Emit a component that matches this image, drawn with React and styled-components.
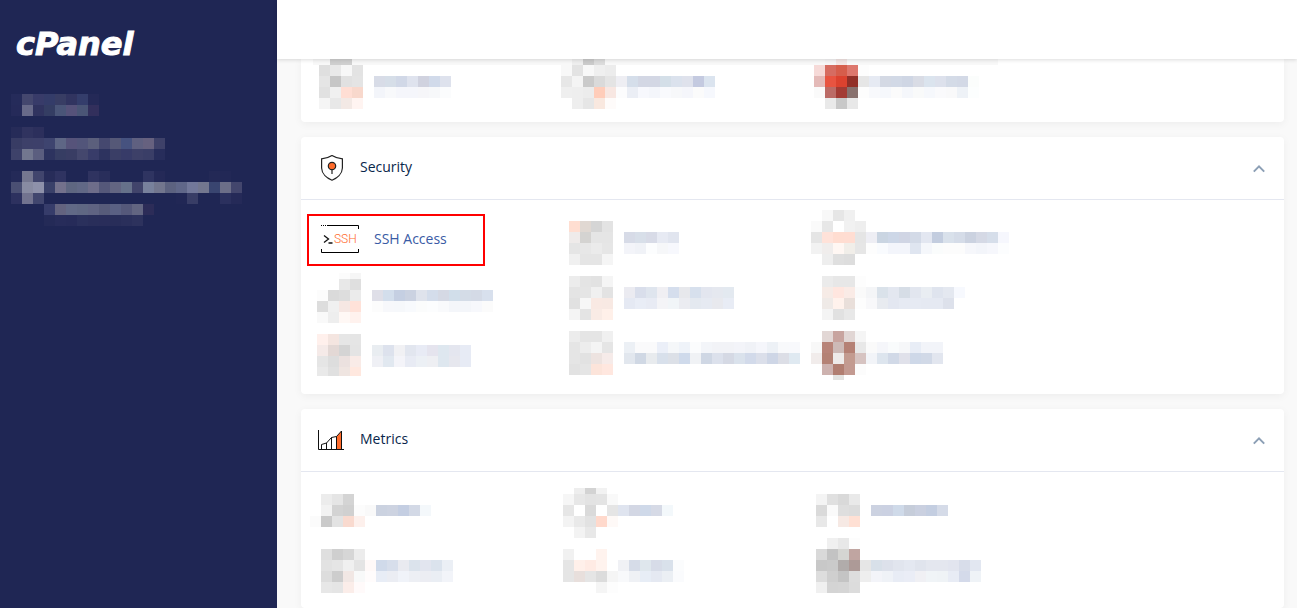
import React from 'react';
import styled, { createGlobalStyle } from 'styled-components';

const GlobalStyle = createGlobalStyle`
    *{
        box-sizing: border-box;
    }

    body{
        margin: 0;
        background-color: #f9f9f9;
        color: #08264a;
        font-family: 'Open Sans', 'Noto Sans', sans-serif;
        font-size: 14px;
        line-height: 20px;
    }
`;

const Page = styled.div`
    display: flex;
    height: 100vh;
    overflow: hidden;
`;

const Sidebar = styled.aside`
    flex: 0 0 277px;
    padding: 24px 11px;
    background-color: #1f2654;
`;

const Logo = styled.a`
    display: block;
    padding-left: 5px;
    margin-bottom: 30px;
    color: #fff;
    font-family: 'DejaVu Sans', Verdana, sans-serif;
    font-size: 32px;
    font-weight: 700;
    font-style: italic;
    line-height: 40px;
    text-decoration: none;
    -webkit-text-stroke: 1px #fff;
`;

const Main = styled.div`
    flex: 1;
    min-width: 0;
    display: flex;
    flex-direction: column;
`;

const Topbar = styled.header`
    flex: 0 0 59px;
    z-index: 1;
    background-color: #fff;
    box-shadow: 0 1px 4px rgba(0, 0, 0, 0.14);
`;

const Content = styled.main`
    flex: 1;
    min-height: 0;
    overflow: hidden;
    display: flex;
    flex-direction: column;
    gap: 15px;
    padding: 0 13px 0 24px;
`;

const Panel = styled.section`
    flex: none;
    background-color: #fff;
    border-radius: ${props => props.$flush ? '0 0 4px 4px' : '4px'};
    box-shadow: 0 2px 8px rgba(0, 0, 0, 0.05);
`;

const PanelHeader = styled.div`
    display: flex;
    align-items: center;
    gap: 14px;
    height: 63px;
    padding: 0 17px;
    border-bottom: 1px solid #e4e7f0;
`;

const PanelTitle = styled.h2`
    flex: 1;
    margin: 0 0 2px;
    font-size: 14px;
    font-weight: 400;
`;

const Toggle = styled.button`
    display: flex;
    padding: 2px;
    border: 0;
    background: none;
    color: #8c9fb5;
    cursor: pointer;
`;

const Tiles = styled.div`
    display: grid;
    grid-template-columns: repeat(auto-fill, 252px);
    grid-auto-rows: 52px;
    row-gap: 6px;
    padding: ${props => props.$flush ? '0 6px 11px' : '14px 6px 12px'};
    ${props => props.$flush && 'background: linear-gradient(#f8f8f8, #f8f8f8) no-repeat 12px 0 / 685px 6px;'}
`;

const Highlighted = styled.a`
    display: flex;
    align-items: center;
    gap: 15px;
    width: 178px;
    height: 52px;
    padding: 0 12px;
    border: 2px solid #f00;
    color: #3a5ba5;
    text-decoration: none;

    span{
        margin-bottom: 2px;
    }
`;

const Blocks = styled.svg`
    display: block;
    width: 100%;
    height: ${props => props.$height}px;
    overflow: visible;
    shape-rendering: crispEdges;
`;

const CELL = 11;

// every row is a list of hex colours, "-" leaves the cell empty
// first and last are the heights of a top or bottom row that is cut off
const Mosaic = ({ x = 0, y = 0, first = CELL, last = CELL, rows, height = 52 }) => {
    const rowHeight = r => {
        if (r === 0) return first;
        return r === rows.length - 1 ? last : CELL;
    };

    return (
        <Blocks $height={height} aria-hidden="true">
            {rows.map((row, r) => row.split(' ').map((color, c) => color !== '-' && (
                <rect
                    key={`${r}-${c}`}
                    x={x + c * CELL}
                    y={r === 0 ? y : y + first + (r - 1) * CELL}
                    width={CELL}
                    height={rowHeight(r)}
                    fill={`#${color}`}
                />
            )))}
        </Blocks>
    );
};

const account = [
    '252b5a 44476e 383b69 343c69 383d64 313460 343d6b 242957',
    '252a59 686a89 30335f 343d63 4a5578 56527a 4a5576 322f5c',
    '-',
    '262b58 30335f 2c2f5c',
    '383c64 3d4069 3d406a 3e446f 5e6685 56537a 52557a 5b5f7c 45486f 555877 46527f 5f6080 66617f 3e4169',
    '3e426a 72778f 5b5e7f 2d335f 363d63 393d64 44476d 383c69 2d335f 3a3e66 373b68 3d4068 3a3e67 272d5b',
    '-',
    '242a58 757790 41456d 272c59 2f3361 - - 2f3360 292e5b - - - 2f3461 242957 - - - - 232956 222856',
    '4a4f73 888ba2 8e91aa 394069 73718c 5e6681 616886 6e6d8a 55587a 636582 66718a 41446b 78819c 72768e 5c6280 606789 72789a 73778f 394570 6c6e88 43466d',
    '2d315f 72738f 41466e - - - - - - - - - - - - 212755 383d66 - - 2b305e 252a58',
    '- - - 363c6a 63637f 616986 5f6783 5f6382 575b7a 5a6083 55587a 626581 2c2c58',
    '- - - 242a57 272c5a 262b59 2a305c 292e5a 292d5a 282d59 2a2f5b 2d325d',
];

const topTiles = [
    {
        x: 12, first: 6, rows: [
            '- cfcfcf d0d0d0',
            'dfdfdf e9e9e9 f7f7f7 e3e3e3',
            'e5e5e5 c6c6c6 e1e1e1 e4e4e4 - d8dce7 d6dee8 d1d8e7 dfe3ee d0d2df d1daea dee2ed',
            'e1e1e1 f0f0f0 ffded4 f8d8cc - f3f5fa f8f9fb f5f6fb f5f6fb f6f6f9 f7f8fa fbfcfd',
            'f5f5f5 e8e8e8 f3e9e5 fff4f1',
        ],
    },
    {
        x: 2, first: 6, rows: [
            'f8f8f8 eeeeee cbcbcb dcdcdc',
            'f8f8f8 e3e3e3 f8f8f8 efefef ececec',
            'e7e7e7 f4f4f4 cacaca dadada e4e4e4 eeeef3 d5deea d3d7e4 d3d7e4 d4dfe8 dbe2ed dfe2ec c4cae0 dbe4ef',
            'efefef eeeeee ececec ffcdba f8e7e2 fcfcfd ebeef5 f7f8fd f4f6fb f9fafd f7f8fa f5f6fb fbfbfb f6f8fd',
            '- eeeeee e6e6e6 f9e8df fefbfa',
        ],
    },
    {
        x: 3, first: 6, rows: [
            '- f6f5f6 f3e5e4',
            'f6dad8 d66c61 d65d4b dd776d fdfdfd',
            'e4bab8 e85441 dc422f 923028 e6e6e6 e6eaf3 d4d9e4 d2d9e6 cfd6e4 d9dce5 dbe4ee dde1ec d4dbe7 d3d9e6 fbfdfc',
            'fafafa bb6b66 a33b34 88716e fdfdfd f8f9fc f6f8fc fbfbfb f5f7fb f9fafa f6f8fc fafafc f9f9fa eef2f7 fcfefe',
            '- e9e9e9 c8c8c8 e8e8e8',
        ],
    },
];

const securityTiles = [
    {
        x: 10, y: 7, rows: [
            'ffded1 e0d8d2 d5d5d5 e3e3e3',
            'efebea d4d3d1 e5e5e5 e5e5e5 - d7dbe7 d8dfe9 d8dbe7 e7eaf3 e1e5ef',
            'e5e5e5 e7e7e7 ebebeb e6e6e6 - f3f4f9 f0f2f7 fcfdfe f6f7f9 f7f8fd',
            'f0f0f0 e5e5e5 e5e5e5 f5f5f5',
        ],
    },
    {
        y: -4, rows: [
            '- f8f8f8 e6e6e6 f0f0f0',
            'fafafa e7e7e7 - f1f1f1 eeeeee',
            'e5e5e5 ffe2d9 ffddd1 ffddd2 e5e5e5 eeeef4 cad5e2 cdd7e7 d0d5e4 d3dae7 e3e7f1 c3cddf d9e1eb d5dce8 cbd2e0 d5d9e5 d6deea f6f7fd',
            'f2f2f2 f0edec fff7f3 f1eee9 e6e6e6 fdfdfd f9fbfe f3f5fb f3f5fb dfe5f0 f5f7fb fafcfc fcfcfc fcfcfc f6f7fb f3f5fa f6f7fc fcfdfe',
            '- eeeeee dfdfdf dddddd',
        ],
    },
    {
        x: 10, y: 1, first: 6, rows: [
            '- - fcfcfc f6f6f6',
            '- - e8e8e8 dfdfdf',
            'fcfcfc dadada dddddd ebebeb - dfdfe8 d3deec c5cfe2 cbd2e1 dfe3ec d4ddeb d5d9e4 d1deea d4dce7 d4dae6 d8e0ed',
            'dddddd f0f0f0 f6e7e3 ffe2d9 - fcfcfc f7f8fb f6f8fb f8fafd fbfcfc fcfdfe f9fafc f4f6fa f4f6fa f7f8fc fbfbfb',
            'f9f9f9 eeeeee fff8f5 fff2ee',
        ],
    },
    {
        x: 10, y: 4, rows: [
            'ececec e4e4e4 e2e2e2 f5f5f5',
            'e4e4e4 e5e5e5 f0f0f0 e3e3e3 - ebebf1 d9deeb dfe5ee f0eff3 d5deed e7e8ec d7e0ed e3e6ef e5e8ef e3e9f0',
            'e1e1e1 f7f7f7 f9e9e3 f8e9e3 - e5e9f3 e9edf6 e8ebf4 f4f4f7 f1f5f8 ebecf1 e4e9f0 e6eaf2 e8e9ee e8ecf5',
            'f4f4f4 e4e4e4 f9ebe5 fff0e9',
        ],
    },
    {
        y: 4, rows: [
            '- ebebeb e7e7e7 e7e7e7 fdfdfd',
            '- f6ebe6 ffe6df faebe6 fafafa f4f5f7 dae2ea e3e7f0 d6dde6 e2e6ef e9edf2 dfe4ee e4e8f0 f7f9fe',
            '- efeae7 fff2ec e9dfda fdfdfd f8f8fa e8ebf0 e3e7f1 e6eaf3 e6eaf3 e5e9f2 e5e9f2 dde1eb',
            '- f4f4f4 e1e1e1 e8e8e8',
        ],
    },
    {
        x: 10, y: 4, last: 9, rows: [
            'fff0ec f4e5e0 e6e6e6 e5e5e5',
            'f5eae8 e3d8d5 d4d4d4 e4e4e4 - e9edf1 dde2ed f1f1f4 e2e6ef e8ebf5 e5e4ee dee7ef e4e6ef e7ebf5',
            'e5e5e5 dddddd ebe1df f9ebe7 - eff0f5 e1e8f0 f4f4f9 e8ebf4 ecf0f5 eeeff3 dee7ef e6e7ee e7ebf5',
            'e9e9e9 e0e0e0 efe5e1 ffe8df',
        ],
    },
    {
        x: 10, y: 1, rows: [
            'ececec e5e5e5 e5e5e5 f0f0f0',
            'e5e5e5 ededed f4f4f4 e5e5e5 - ecf0f5 fafafb fafafb ebeff8 f5f7f9 eff3f9 fbfcfd f3f5f9 f2f3f7 f2f3f7 f3f4f9 f0f2f7 f5f6fb edf1f6 f8f9fb f8f9fc',
            'e5e5e5 e2e2e2 ede3e0 f6ebe9 - e2e7ee d0d8e4 e8ebee d8e0eb dce0e7 cfdaeb f0f2f5 cfd7e4 dce1ec d5d9e4 dae2ec d2daea dbdfea ced6e6 dcdee6 dfe9f1',
            'e2e2e2 e5e5e5 fce4da ffe7df',
        ],
    },
    {
        y: 1, last: 5, rows: [
            '- e2d7d5 c8a49f e1d6d4 f5f5f5',
            'f8f8f8 b88479 cdbab7 b58175 e8e8e8 fafafa f5f6fa f9fbfc f6f7f9 e8edf6 f2f4f9 f2f4f9',
            'f1eceb b48275 eeebea c39b90 d6c3c1 f2f4f8 dde5ee d1d9e7 e0e1ea ced8e8 d1d9e7 e2e6ef',
            '- cdb2af b17e71 c39a91 fcfcfc',
            '- - e3e3e1',
        ],
    },
];

const metricsTiles = [
    {
        x: 3, y: 8, rows: [
            '- ececec e5e5e5 d4d4d4',
            '- f2f2f2 d3d3d3 d0d0d0 fcfcfc f9f9f9 cbd2e0 cdd3e1 c4cee2 d3d9e6 f4f8fb',
            'fbfbfb cacaca e3e3e3 f9dacf fdf0ec',
        ],
    },
    {
        x: 4, y: 2, first: 6, rows: [
            '- eeeeee d3d3d3 f2f2f2',
            'f6f6f6 e7e7e7 e3e3e3 e4e4e4 f9f9f9',
            'e6e6e6 - dadada - e5e5e5 dfe4ef d3d7e4 cfd9e9 d6dae6 f3f8fb',
            'f3f3f3 e9e9e9 e2e2e2 ffd9cc fef9f7',
            '- f3f3f3 e8e8e8',
        ],
    },
    {
        x: 5, y: 8, rows: [
            'f4f4f4 e0e0e0 d9d9d9 e9e9e9',
            'dadada fafafa dedede dcdcdc - ccd2e1 cbd1e2 cfdae9 c6cdda cad0e0 c4cee1 d5dbe8',
            'e8e8e8 - f6e9e4 ffe0d4',
        ],
    },
    {
        x: 14, y: 5, rows: [
            'dfdfdf cfcfcf d6d6d6 ececec',
            'e2e2e2 e5e5e5 f0f0f0 e4e4e4 fff9f8 d0daea d7deeb e9eaf0 dbe3ec e2e5ef dbe3ed ebeff5',
            'dddddd cdcdcd f1e7e4 f8f9f9 fffcfc e8edf6 ebedf3 f0f3f9 edeff4 ecedf3 eaeef4 f2f4f9',
            'e7e7e7 e5e5e5 fbede9 fffafa',
        ],
    },
    {
        x: 4, y: 5, rows: [
            'f1f1f1 - - fff3ee',
            'e5e5e5 fff0ea ffebe4 fff3ee - f0f1f5 d6dce8 dfe7ed d7dce8 d9e1eb fbfcfd',
            'e5e5e5 e8dfdc e5e5e5 dcdcdc f5f5f5 f8f9fb eff1f5 e7edf6 e5e9f2 ebeff4 fafbfd',
            '- - - f5f5f5 fdfdfd',
        ],
    },
    {
        x: 5, y: -6, rows: [
            '- f0f0f0 e8e8e8 fdfdfd',
            'd9d9d9 c3c3c3 d5d5d2 c0a5a1',
            'c8c8c8 cacaca b1acab ad9a97 e6e6e6 d8e0e9 dde1eb e1e5ee e4e8f1 e0e4ed e4e7ef e4e7ef e2e5ef d8ddea e2e7f1',
            'dddddd cfcfcf c4c4c4 dddddd eeeeee f3f4f9 eff2f7 e8ecf5 eaedf6 f0f0f4 f0f4f7 eff3f6 e8ecf5 d4daea eff3f7',
            'f0f0f0 d4d4d4 d5d5d5 dcdcdc',
        ],
    },
];

const ShieldIcon = () => (
    <svg width="28" height="28" viewBox="0 0 28 28" fill="none" stroke="#222" strokeWidth="1.2" aria-hidden="true">
        <path d="M14 1.6 C11 3.6 7 4.6 3.6 4.8 V14 C3.8 19.8 9 24.2 14 26.2 C19 24.2 24.2 19.8 24.4 14 V4.8 C21 4.6 17 3.6 14 1.6 Z" />
        <path d="M14 15.5 V20" />
        <circle cx="14" cy="12" r="3.7" fill="#ff6c2c" />
    </svg>
);

const ChartIcon = () => (
    <svg width="28" height="28" viewBox="0 0 28 28" fill="none" stroke="#111" strokeWidth="1" aria-hidden="true">
        <path d="M18.5 23.5 V10.5 L23.5 5 V23.5 Z" fill="#ff6c2c" />
        <path d="M0.5 4 V23.5 H26" />
        <path d="M3.5 23 V18.5 L8.5 17 L13.5 11.5 L18.5 10.5 M8.5 23 V17 M13.5 23 V11.5" />
    </svg>
);

const SshIcon = () => (
    <svg width="38" height="30" viewBox="0 0 38 30" aria-hidden="true">
        <path d="M0 0.5 H1 M2 0.5 H3 M4 0.5 H5 M6 0.5 H37.5 V4 M0.5 24 V27.5 H37.5 V24" fill="none" stroke="#000" />
        <path d="M3 10.5 L7.5 14 L3 17.5 M7.5 18 H11.5" fill="none" stroke="#111" strokeWidth="1.3" />
        <text x="13" y="18" fill="#ff6c2c" fontFamily="Roboto, sans-serif" fontWeight="300" fontSize="12">SSH</text>
    </svg>
);

const Section = ({ title, icon, children }) => (
    <Panel>
        <PanelHeader>
            {icon}
            <PanelTitle>{title}</PanelTitle>
            <Toggle type="button" aria-label={`Collapse ${title}`}>
                <svg width="12" height="10" viewBox="0 0 12 10" fill="none" stroke="currentColor" strokeWidth="2">
                    <path d="M0.8 8.6 L6 3.4 L11.2 8.6" />
                </svg>
            </Toggle>
        </PanelHeader>
        <Tiles>{children}</Tiles>
    </Panel>
);

const App = () => {
    return (
        <>
            <GlobalStyle />
            <Page>
                <Sidebar>
                    <Logo href="#">cPanel</Logo>
                    <Mosaic rows={account} height={132} />
                </Sidebar>
                <Main>
                    <Topbar />
                    <Content>
                        <Panel $flush>
                            <Tiles $flush>
                                {topTiles.map((tile, i) => <Mosaic key={i} {...tile} />)}
                            </Tiles>
                        </Panel>
                        <Section title="Security" icon={<ShieldIcon />}>
                            <Highlighted href="#">
                                <SshIcon />
                                <span>SSH Access</span>
                            </Highlighted>
                            {securityTiles.map((tile, i) => <Mosaic key={i} {...tile} />)}
                        </Section>
                        <Section title="Metrics" icon={<ChartIcon />}>
                            {metricsTiles.map((tile, i) => <Mosaic key={i} {...tile} />)}
                        </Section>
                    </Content>
                </Main>
            </Page>
        </>
    )
}

export default App
